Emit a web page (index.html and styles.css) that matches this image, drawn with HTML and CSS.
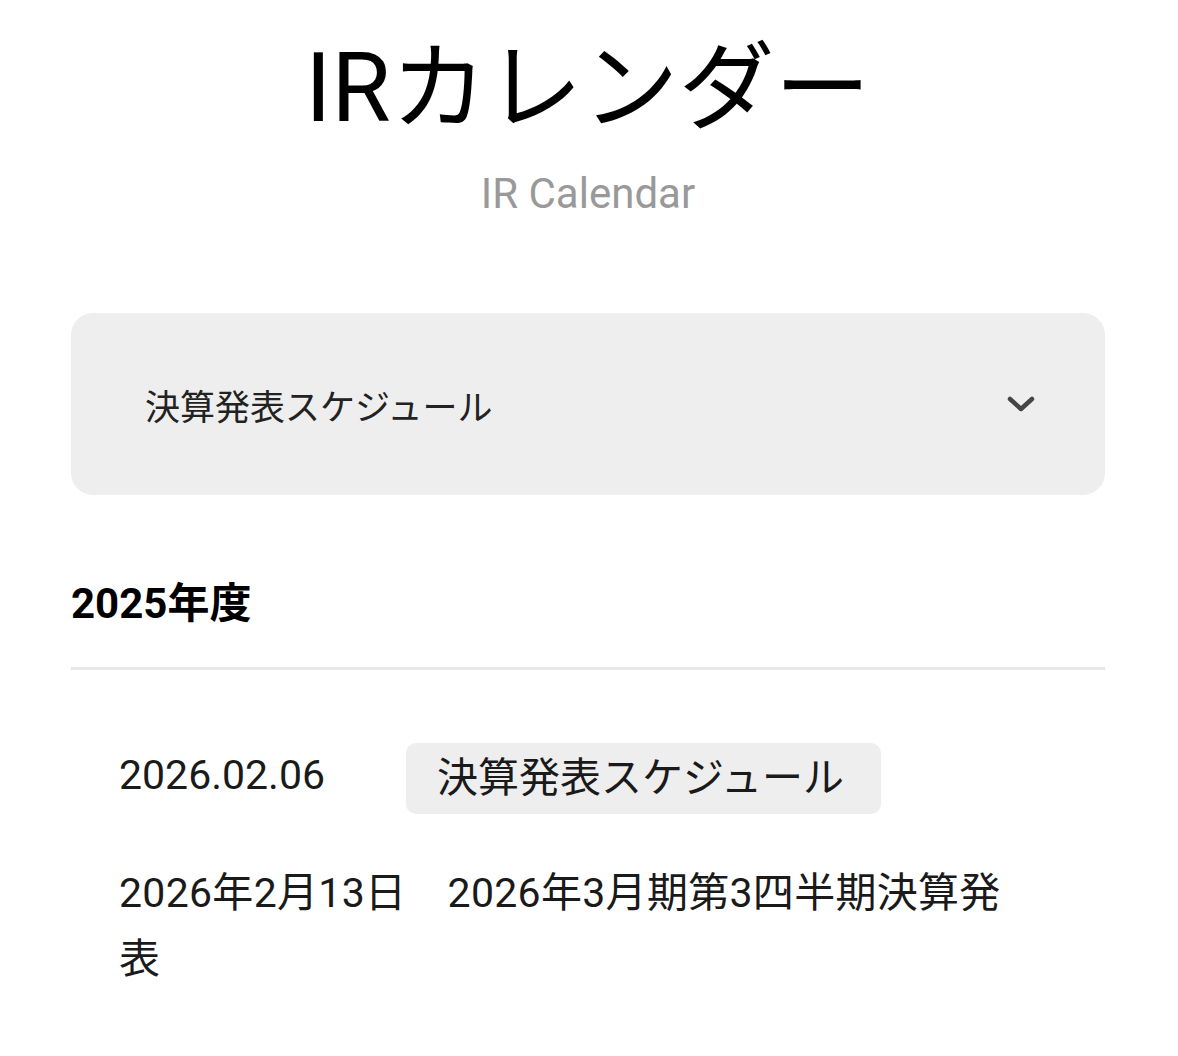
FILE: index.html
```html
<!DOCTYPE html>
<html lang="ja">
<head>
<meta charset="utf-8">
<title>IRカレンダー</title>
<link rel="stylesheet" href="styles.css">
</head>
<body>
<main class="page">
  <header class="page-head">
    <h1 class="title">IRカレンダー</h1>
    <p class="subtitle">IR Calendar</p>
  </header>

  <div class="select">
    <span class="select-label">決算発表スケジュール</span>
    <svg class="chevron" width="28" height="16" viewBox="0 0 28 16" aria-hidden="true">
      <polyline points="3,3 14,13 25,3" fill="none" stroke="#454545" stroke-width="4.5" stroke-linecap="round" stroke-linejoin="round"/>
    </svg>
  </div>

  <section class="year">
    <h2 class="year-title">2025年度</h2>
    <ul class="entries">
      <li class="entry">
        <span class="entry-date">2026.02.06</span>
        <span class="tag">決算発表スケジュール</span>
      </li>
      <li class="entry-text">2026年2月13日　2026年3月期第3四半期決算発表</li>
    </ul>
  </section>
</main>
</body>
</html>
```

FILE: styles.css
```css
* {
  box-sizing: border-box;
}

html, body {
  margin: 0;
  padding: 0;
  background: #ffffff;
}

body {
  font-family: Roboto, "Noto Sans CJK JP", sans-serif;
  color: #111111;
}

.page {
  width: 1036px;
  margin: 0 auto;
  padding: 31px 2px 0 0;
}

.page-head {
  text-align: center;
}

.title {
  margin: 0;
  font-size: 96px;
  font-weight: 400;
  line-height: 115px;
  color: #000000;
}

.subtitle {
  margin: 24px 0 0;
  font-size: 42px;
  line-height: 48px;
  color: #999999;
}

.select {
  margin-top: 95px;
  height: 182px;
  background: #eeeeee;
  border-radius: 22px;
  padding: 0 70px 0 74px;
  display: flex;
  align-items: center;
  justify-content: space-between;
}

.select-label {
  font-size: 35px;
  color: #222222;
}

.chevron {
  display: block;
}

.year {
  margin-top: 84px;
}

.year-title {
  margin: 0;
  font-size: 42px;
  font-weight: 700;
  line-height: 50px;
  padding-bottom: 38px;
  border-bottom: 3px solid #e8e8e8;
  color: #000000;
}

.entries {
  list-style: none;
  margin: 0;
  padding: 73px 0 0 48px;
}

.entry {
  display: flex;
  align-items: center;
  gap: 81px;
}

.entry-date {
  font-size: 41px;
  line-height: 50px;
  margin-top: -8px;
  color: #1a1a1a;
}

.tag {
  display: inline-block;
  background: #eeeeee;
  border-radius: 10px;
  height: 71px;
  line-height: 71px;
  padding: 0 37px 0 31px;
  font-size: 41px;
  color: #1a1a1a;
}

.entry-text {
  margin-top: 46px;
  max-width: 920px;
  font-size: 41px;
  line-height: 66px;
  letter-spacing: 0.3px;
  color: #1a1a1a;
}
```
